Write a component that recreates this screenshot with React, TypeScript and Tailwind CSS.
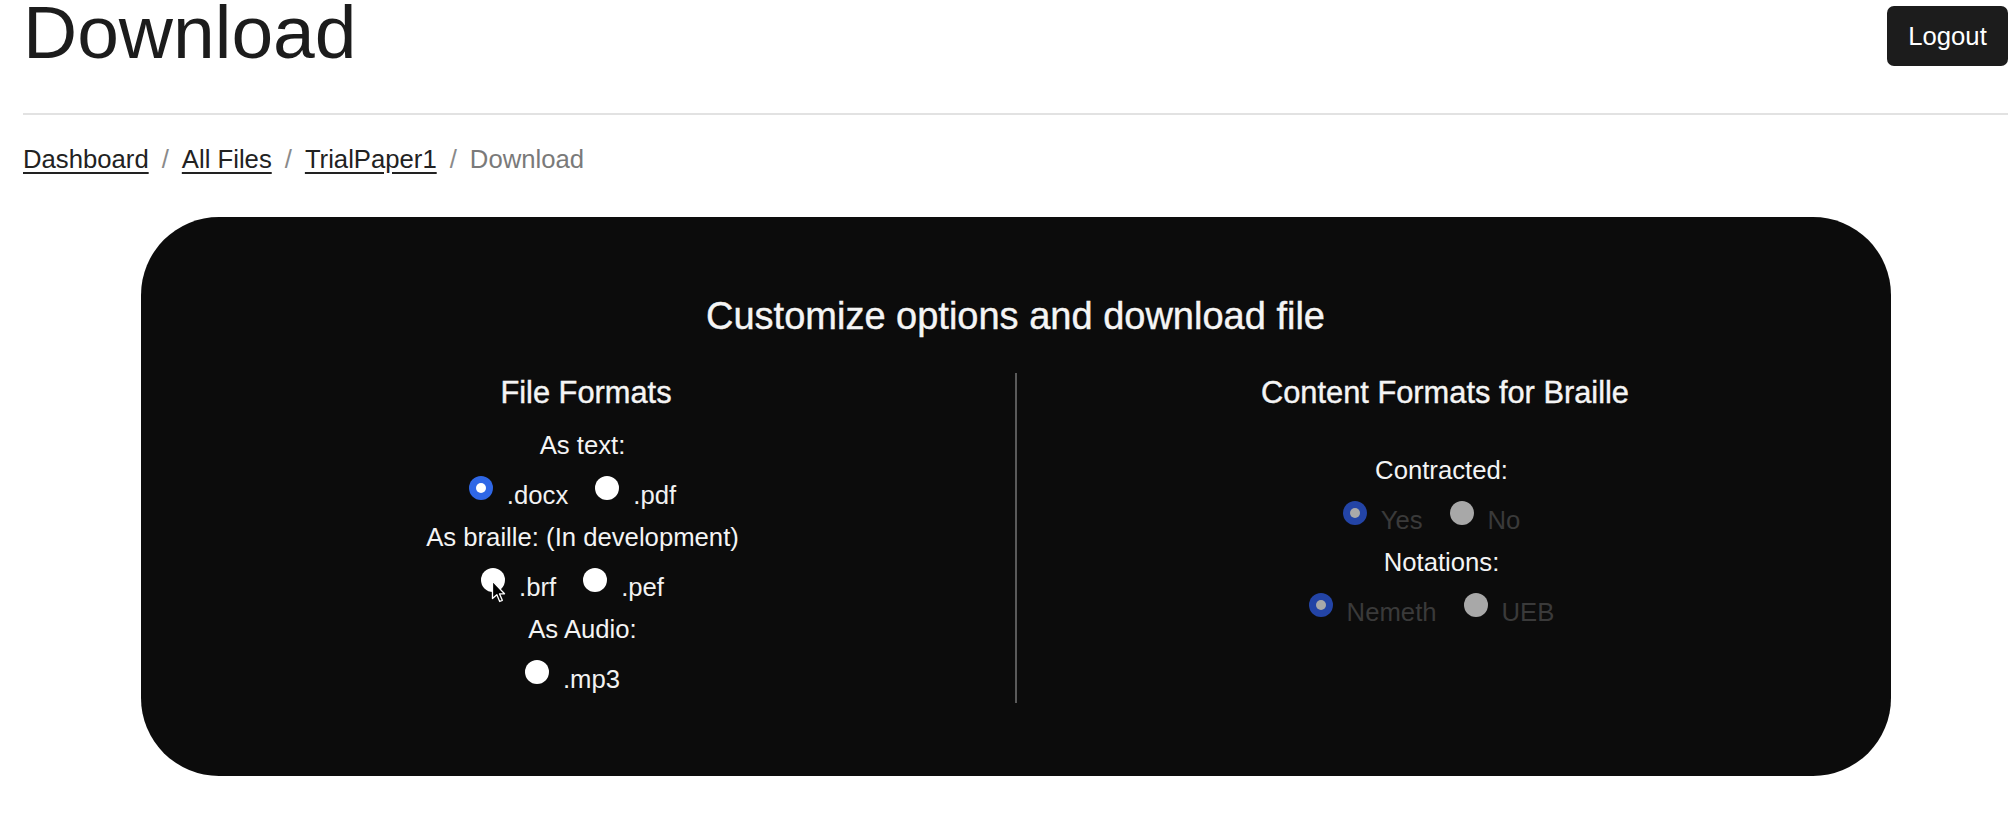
function Radio({ checked, dim }: { checked?: boolean; dim?: boolean }) {
  if (checked) {
    return (
      <span
        className={`flex h-6 w-6 shrink-0 items-center justify-center rounded-full ${
          dim ? "bg-[#2344a6]" : "bg-[#2f67e6]"
        }`}
      >
        <span className={`h-[10px] w-[10px] rounded-full ${dim ? "bg-[#a9a9a9]" : "bg-white"}`} />
      </span>
    );
  }
  return <span className={`block h-6 w-6 shrink-0 rounded-full ${dim ? "bg-[#a8a8a8]" : "bg-white"}`} />;
}

function Cursor() {
  return (
    <svg
      className="absolute left-[10px] top-[12px]"
      width="15"
      height="23"
      viewBox="0 0 13 21"
    >
      <path
        d="M1 1 L1 17 L5 13.5 L7.6 19.6 L10 18.6 L7.4 12.6 L12 12.6 Z"
        fill="#000"
        stroke="#fff"
        strokeWidth="1.2"
        strokeLinejoin="round"
      />
    </svg>
  );
}

type Opt = { label: string; checked?: boolean; cursor?: boolean };

function OptionRow({ options, dim }: { options: Opt[]; dim?: boolean }) {
  return (
    <div className="flex h-[56px] items-start justify-center">
      {options.map((o) => (
        <div key={o.label} className="mr-[27px] flex items-start">
          <div className="relative mt-[13px]">
            <Radio checked={o.checked} dim={dim} />
            {o.cursor && <Cursor />}
          </div>
          <span
            className={`ml-[14px] mt-[14px] leading-[36px] ${dim ? "text-[#3a3a3a]" : "text-[#f2f2f2]"}`}
          >
            {o.label}
          </span>
        </div>
      ))}
    </div>
  );
}

function Label({ children, className = "" }: { children: React.ReactNode; className?: string }) {
  return <div className={`pr-[7px] text-center leading-[36px] text-[#f4f4f4] ${className}`}>{children}</div>;
}

function App() {
  return (
    <div className="min-h-screen w-full overflow-hidden bg-white font-['Liberation_Sans',Arial,sans-serif] text-[25.7px] text-[#1d1d1d]">
      <div className="pl-[23px] pr-[6px]">
        <header className="flex h-[113px] items-start justify-between">
          <h1 className="text-[75px] leading-[64px] text-[#1c1c1c]">Download</h1>
          <button className="mt-[6px] h-[60px] w-[121px] rounded-[7px] bg-[#1c1c1c] text-[25.7px] text-white">
            Logout
          </button>
        </header>
        <div className="h-[2px] bg-[#e2e2e2]" />

        <nav className="mt-[26px] flex items-center leading-[36px]">
          <a className="text-[#222] underline underline-offset-[4px]">Dashboard</a>
          <span className="mx-[13px] text-[#8a8a8a]">/</span>
          <a className="text-[#222] underline underline-offset-[4px]">All Files</a>
          <span className="mx-[13px] text-[#8a8a8a]">/</span>
          <a className="text-[#222] underline underline-offset-[4px]">TrialPaper1</a>
          <span className="mx-[13px] text-[#8a8a8a]">/</span>
          <span className="text-[#7a7a7a]">Download</span>
        </nav>

        <section className="mx-auto mt-[40px] w-[1750px] rounded-[78px] bg-[#0c0c0c] px-[17px] pb-[73px] pt-[76px]">
          <h2 className="text-center text-[38px] leading-[46px] text-[#f5f5f5] [-webkit-text-stroke:0.4px_#f5f5f5]">
            Customize options and download file
          </h2>
          <div className="mt-[34px] flex">
            <div className="flex-1">
              <h3 className="text-center text-[30.8px] leading-[40px] text-[#f5f5f5] [-webkit-text-stroke:0.4px_#f5f5f5]">
                File Formats
              </h3>
              <Label className="mt-[14px]">As text:</Label>
              <OptionRow options={[{ label: ".docx", checked: true }, { label: ".pdf" }]} />
              <Label>As braille: (In development)</Label>
              <OptionRow options={[{ label: ".brf", cursor: true }, { label: ".pef" }]} />
              <Label>As Audio:</Label>
              <OptionRow options={[{ label: ".mp3" }]} />
            </div>
            <div className="w-[2px] bg-[#5a5a5a]" />
            <div className="flex-1">
              <h3 className="text-center text-[30.8px] leading-[40px] text-[#f5f5f5] [-webkit-text-stroke:0.4px_#f5f5f5]">
                Content Formats for Braille
              </h3>
              <Label className="mt-[39px]">Contracted:</Label>
              <OptionRow dim options={[{ label: "Yes", checked: true }, { label: "No" }]} />
              <Label>Notations:</Label>
              <OptionRow dim options={[{ label: "Nemeth", checked: true }, { label: "UEB" }]} />
            </div>
          </div>
        </section>
      </div>
    </div>
  );
}

export default App;
